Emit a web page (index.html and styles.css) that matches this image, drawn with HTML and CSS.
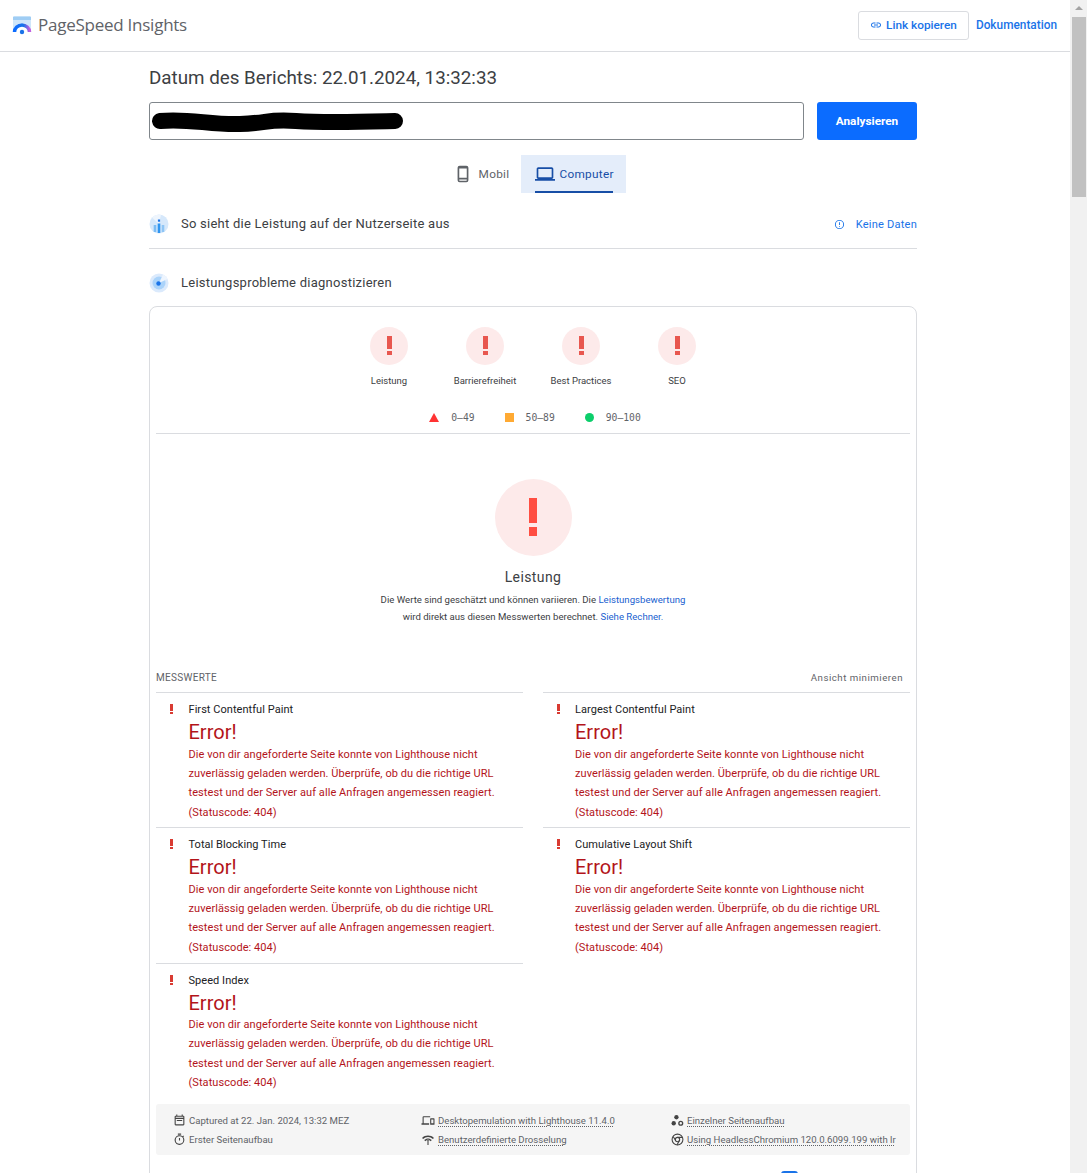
FILE: index.html
```html
<!DOCTYPE html>
<html lang="de">
<head>
  <meta charset="UTF-8" />
  <title>PageSpeed Insights</title>
  <link rel="stylesheet" href="styles.css">
</head>
<body>
<div class="window">
  <div class="page">
    <header class="topbar">
      <div class="brand">
        <svg class="logo" width="20" height="20" viewBox="0 0 20 20">
          <defs>
            <linearGradient id="arcGrad" x1="0" x2="1" y1="0" y2="0">
              <stop offset="0" stop-color="#0b6cff"/>
              <stop offset="0.6" stop-color="#1a73e8"/>
              <stop offset="1" stop-color="#c060e0"/>
            </linearGradient>
          </defs>
          <path d="M1 1.500a1 1 0 0 1 1-1h16a1 1 0 0 1 1 1V13H1z" fill="#cfe6fa"/>
          <path d="M1 1.500a1 1 0 0 1 1-1h16a1 1 0 0 1 1 1V4H1z" fill="#9fcdf4"/>
          <path d="M1 16a9 9 0 0 1 18 0" fill="#fff"/>
          <path d="M2.500 16a7.500 7 0 0 1 15 0" fill="none" stroke="url(#arcGrad)" stroke-width="3.500"/>
          <circle cx="10" cy="16" r="2.200" fill="#1a73e8"/>
        </svg>
        <span class="brand-name">PageSpeed Insights</span>
      </div>
      <div class="top-actions">
        <button class="copy-btn">
          <svg width="12" height="12" viewBox="0 0 24 24" fill="#1a73e8"><path d="M3.900 12c0-1.710 1.390-3.100 3.100-3.100h4V7H7c-2.760 0-5 2.240-5 5s2.240 5 5 5h4v-1.900H7c-1.710 0-3.100-1.390-3.100-3.100zM8 13h8v-2H8v2zm9-6h-4v1.900h4c1.710 0 3.100 1.390 3.100 3.100s-1.390 3.100-3.100 3.100h-4V17h4c2.760 0 5-2.240 5-5s-2.240-5-5-5z"/></svg>
          Link kopieren
        </button>
        <a class="doc-link">Dokumentation</a>
      </div>
    </header>

    <main class="content">
      <h1 class="report-date">Datum des Berichts: 22.01.2024, 13:32:33</h1>

      <div class="url-row">
        <div class="url-input">
          <svg class="scribble" width="256" height="26" viewBox="0 0 256 26">
            <path d="M9 12c28-3 50 4 80 3s26-5 56-3 60 1 99 0" fill="none" stroke="#000" stroke-width="16" stroke-linecap="round"/>
          </svg>
        </div>
        <button class="analyze-btn">Analysieren</button>
      </div>

      <div class="tabs">
        <div class="tab">
          <svg width="20" height="20" viewBox="0 0 24 24" fill="#5f6368"><path d="M16 2H8a2.500 2.500 0 0 0-2.500 2.500v15A2.500 2.500 0 0 0 8 22h8a2.500 2.500 0 0 0 2.500-2.500v-15A2.500 2.500 0 0 0 16 2zm.5 14.500h-9v-11h9zM7.500 18.500h9v1a.5.500 0 0 1-.5.500H8a.5.500 0 0 1-.5-.5z"/></svg>
          Mobil
        </div>
        <div class="tab active">
          <svg width="20" height="20" viewBox="0 0 24 24" fill="#174ea6"><path d="M20 18c1.100 0 2-.9 2-2V6c0-1.100-.9-2-2-2H4c-1.100 0-2 .9-2 2v10c0 1.100.9 2 2 2H0v2h24v-2h-4zM4 6h16v10H4V6z"/></svg>
          Computer
        </div>
      </div>

      <div class="section-row bordered">
        <svg class="section-icon" width="20" height="20" viewBox="0 0 20 20">
          <circle cx="10" cy="10" r="9.500" fill="#d6e8fb"/>
          <path d="M10 10L3 3.500A9.500 9.500 0 0 1 12 .7z" fill="#eef5fd"/>
          <rect x="8.900" y="5.500" width="2.200" height="2.200" fill="#1a73e8"/>
          <rect x="4.700" y="11" width="2.600" height="7" fill="#7cbcf4"/>
          <rect x="8.700" y="9.500" width="2.600" height="9.500" fill="#2f95f0"/>
          <rect x="12.700" y="11" width="2.600" height="7" fill="#8fc5f5"/>
        </svg>
        <span class="section-title">So sieht die Leistung auf der Nutzerseite aus</span>
        <span class="no-data">
          <svg width="11" height="11" viewBox="0 0 24 24" fill="#1a73e8"><path d="M12 2a10 10 0 1 0 0 20 10 10 0 0 0 0-20zm0 18a8 8 0 1 1 0-16 8 8 0 0 1 0 16zm-1-13h2v6h-2zm0 8h2v2h-2z"/></svg>
          Keine Daten
        </span>
      </div>

      <div class="section-row diagnose">
        <svg class="section-icon" width="20" height="20" viewBox="0 0 20 20">
          <circle cx="10" cy="10" r="9.500" fill="#dbeafc"/>
          <circle cx="10" cy="10" r="6.500" fill="#aad3fa"/>
          <path d="M10 10L14 1.500A9.500 9.500 0 0 1 18.500 6z" fill="#eef5fe"/>
          <circle cx="9.500" cy="10.500" r="2.200" fill="#1a73e8"/>
        </svg>
        <span class="section-title">Leistungsprobleme diagnostizieren</span>
      </div>

      <section class="report">
        <div class="gauges">
          <div class="gauge"><div class="gauge-dot"><span class="bang"></span></div><span class="gauge-label">Leistung</span></div>
          <div class="gauge"><div class="gauge-dot"><span class="bang"></span></div><span class="gauge-label">Barrierefreiheit</span></div>
          <div class="gauge"><div class="gauge-dot"><span class="bang"></span></div><span class="gauge-label">Best Practices</span></div>
          <div class="gauge"><div class="gauge-dot"><span class="bang"></span></div><span class="gauge-label">SEO</span></div>
        </div>

        <div class="legend">
          <span class="legend-item"><i class="tri"></i>0–49</span>
          <span class="legend-item"><i class="square"></i>50–89</span>
          <span class="legend-item"><i class="circle"></i>90–100</span>
        </div>

        <div class="score">
          <div class="score-dot"><span class="bang big"></span></div>
          <div class="score-title">Leistung</div>
          <p class="score-note">Die Werte sind geschätzt und können variieren. Die <a>Leistungsbewertung</a><br>wird direkt aus diesen Messwerten berechnet. <a>Siehe Rechner.</a></p>
        </div>

        <div class="metrics-head">
          <span class="metrics-title">MESSWERTE</span>
          <span class="metrics-toggle">Ansicht minimieren</span>
        </div>

        <div class="metrics">
          <div class="metric">
            <span class="bang small"></span>
            <div class="metric-name">First Contentful Paint</div>
            <div class="metric-error">Error!</div>
            <div class="metric-text">Die von dir angeforderte Seite konnte von Lighthouse nicht<br>zuverlässig geladen werden. Überprüfe, ob du die richtige URL<br>testest und der Server auf alle Anfragen angemessen reagiert.<br>(Statuscode: 404)</div>
          </div>
          <div class="metric">
            <span class="bang small"></span>
            <div class="metric-name">Largest Contentful Paint</div>
            <div class="metric-error">Error!</div>
            <div class="metric-text">Die von dir angeforderte Seite konnte von Lighthouse nicht<br>zuverlässig geladen werden. Überprüfe, ob du die richtige URL<br>testest und der Server auf alle Anfragen angemessen reagiert.<br>(Statuscode: 404)</div>
          </div>
          <div class="metric">
            <span class="bang small"></span>
            <div class="metric-name">Total Blocking Time</div>
            <div class="metric-error">Error!</div>
            <div class="metric-text">Die von dir angeforderte Seite konnte von Lighthouse nicht<br>zuverlässig geladen werden. Überprüfe, ob du die richtige URL<br>testest und der Server auf alle Anfragen angemessen reagiert.<br>(Statuscode: 404)</div>
          </div>
          <div class="metric">
            <span class="bang small"></span>
            <div class="metric-name">Cumulative Layout Shift</div>
            <div class="metric-error">Error!</div>
            <div class="metric-text">Die von dir angeforderte Seite konnte von Lighthouse nicht<br>zuverlässig geladen werden. Überprüfe, ob du die richtige URL<br>testest und der Server auf alle Anfragen angemessen reagiert.<br>(Statuscode: 404)</div>
          </div>
          <div class="metric">
            <span class="bang small"></span>
            <div class="metric-name">Speed Index</div>
            <div class="metric-error">Error!</div>
            <div class="metric-text">Die von dir angeforderte Seite konnte von Lighthouse nicht<br>zuverlässig geladen werden. Überprüfe, ob du die richtige URL<br>testest und der Server auf alle Anfragen angemessen reagiert.<br>(Statuscode: 404)</div>
          </div>
        </div>

        <div class="env">
          <div class="env-col col-a">
            <span class="env-item">
              <svg width="13" height="13" viewBox="0 0 24 24" fill="#444"><path d="M19 3h-1V1h-2v2H8V1H6v2H5a2 2 0 0 0-2 2v14a2 2 0 0 0 2 2h14a2 2 0 0 0 2-2V5a2 2 0 0 0-2-2zm0 16H5V9h14zM5 7V5h14v2zm2 4h10v2H7z"/></svg>
              Captured at 22. Jan. 2024, 13:32 MEZ
            </span>
            <span class="env-item">
              <svg width="13" height="13" viewBox="0 0 24 24" fill="#444"><path d="M9 1h6v2H9zm10 6.400 1.400-1.400L19 4.600l-1.400 1.400A9 9 0 1 0 21 13a9 9 0 0 0-2-5.600zM12 20a7 7 0 1 1 0-14 7 7 0 0 1 0 14zm-1-11h2v5h-2z"/></svg>
              Erster Seitenaufbau
            </span>
          </div>
          <div class="env-col col-b">
            <span class="env-item">
              <svg width="14" height="13" viewBox="0 0 24 24" fill="#444"><path d="M4 6h12V4H4a2 2 0 0 0-2 2v11H0v3h14v-3H4zm19 2h-6a1 1 0 0 0-1 1v10a1 1 0 0 0 1 1h6a1 1 0 0 0 1-1V9a1 1 0 0 0-1-1zm-1 9h-4v-7h4z"/></svg>
              <u>Desktopemulation with Lighthouse 11.4.0</u>
            </span>
            <span class="env-item">
              <svg width="14" height="13" viewBox="0 0 24 24" fill="#444"><path d="M1 9l2 2c5-5 13-5 18 0l2-2C17 3 7 3 1 9zm4 4 2 2c2.800-2.800 7.200-2.800 10 0l2-2c-3.900-3.900-10.100-3.900-14 0zm6-1h2v10h-2z"/></svg>
              <u>Benutzerdefinierte Drosselung</u>
            </span>
          </div>
          <div class="env-col col-c">
            <span class="env-item">
              <svg width="13" height="13" viewBox="0 0 24 24"><circle cx="10" cy="6" r="4" fill="#444"/><circle cx="5" cy="17" r="4" fill="#444"/><circle cx="18" cy="17" r="3.500" fill="none" stroke="#444" stroke-width="2.500"/></svg>
              <u>Einzelner Seitenaufbau</u>
            </span>
            <span class="env-item">
              <svg width="13" height="13" viewBox="0 0 24 24" fill="none" stroke="#444" stroke-width="2"><circle cx="12" cy="12" r="10"/><circle cx="12" cy="12" r="4"/><path d="M12 8h9M8.500 14 4 6.500M15.500 14 11 22"/></svg>
              <u>Using HeadlessChromium 120.0.6099.199 with lr</u>
            </span>
          </div>
        </div>

        <div class="view-switch"><span class="switch-box"></span></div>
      </section>
    </main>
  </div>

  <div class="scrollbar">
    <div class="scroll-up"></div>
    <div class="scroll-thumb"></div>
  </div>
</div>
</body>
</html>
```

FILE: styles.css
```css
* {
  box-sizing: border-box;
}

html, body {
  margin: 0;
  height: 1173px;
  overflow: hidden;
}

body {
  font-family: 'Roboto', sans-serif;
  color: #202124;
  background-color: white;
}

button {
  font-family: inherit;
}

a {
  color: #1a5fd0;
}

.window {
  display: flex;
  height: 1173px;
}

.page {
  flex: 1;
  min-width: 0;
  overflow: hidden;
}

.scrollbar {
  width: 17px;
  background-color: #f1f1f1;
  flex-shrink: 0;
}

.scroll-up {
  height: 17px;
  position: relative;
}

.scroll-up::after {
  content: "";
  position: absolute;
  left: 5px;
  top: 6px;
  border-left: 4px solid transparent;
  border-right: 4px solid transparent;
  border-bottom: 4px solid #a3a3a3;
}

.scroll-thumb {
  height: 180px;
  margin: 0 1px 0 2px;
  background-color: #c1c1c1;
}

/* top bar */
.topbar {
  height: 52px;
  border-bottom: 1px solid #dadce0;
  display: flex;
  align-items: center;
  justify-content: space-between;
  padding: 0 13px 2px 12px;
}

.brand {
  display: flex;
  align-items: center;
  gap: 6px;
}

.logo {
  margin-top: 2px;
}

.brand-name {
  font-family: 'Open Sans', sans-serif;
  font-size: 17px;
  letter-spacing: -0.25px;
  color: #5f6368;
}

.top-actions {
  display: flex;
  align-items: center;
  gap: 7px;
  margin-top: 1px;
}

.copy-btn {
  width: 111px;
  height: 29px;
  background-color: white;
  border: 1px solid #dadce0;
  border-radius: 3px;
  color: #1a73e8;
  font-size: 11.800px;
  font-weight: 500;
  display: flex;
  align-items: center;
  justify-content: center;
  gap: 4px;
  padding: 0;
}

.doc-link {
  color: #1a73e8;
  font-size: 11.850px;
  font-weight: 500;
}

/* main column */
.content {
  width: 768px;
  margin-left: 149px;
}

.report-date {
  margin: 15px 0 0;
  height: 35px;
  line-height: 22px;
  font-size: 18.800px;
  font-weight: 400;
  color: #3c4043;
}

.url-row {
  display: flex;
  justify-content: space-between;
  height: 38px;
}

.url-input {
  width: 655px;
  position: relative;
  border: 1px solid #80868b;
  border-radius: 3px;
}

.scribble {
  position: absolute;
  left: 1px;
  top: 6px;
}

.analyze-btn {
  width: 100px;
  background-color: #0b6cff;
  border: none;
  border-radius: 3px;
  color: white;
  font-size: 11.800px;
  font-weight: 700;
}

.tabs {
  display: flex;
  justify-content: center;
  margin-top: 15px;
  height: 38px;
  margin-left: 13px;
}

.tab {
  display: flex;
  align-items: center;
  gap: 6px;
  padding: 0 12px 0 0;
  font-size: 11.800px;
  letter-spacing: 0.3px;
  color: #5f6368;
}

.tab.active {
  width: 105px;
  flex-shrink: 0;
  padding: 0 0 0 14px;
  gap: 4px;
  background-color: #e4edfa;
  color: #174ea6;
  position: relative;
}

.tab.active::after {
  content: "";
  position: absolute;
  left: 14px;
  right: 13px;
  bottom: 0;
  height: 2px;
  background-color: #174ea6;
}

.section-row {
  display: flex;
  align-items: center;
  font-size: 13px;
}

.section-row.bordered {
  height: 56px;
  border-bottom: 1px solid #dadce0;
  padding-top: 6px;
}

.section-row.diagnose {
  height: 57px;
  padding-top: 10px;
}

.section-icon {
  margin-right: 12px;
  flex-shrink: 0;
}

.section-title {
  color: #3c4043;
  letter-spacing: 0.25px;
}

.no-data {
  margin-left: auto;
  margin-top: 2px;
  display: flex;
  align-items: center;
  gap: 11px;
  color: #1a73e8;
  font-size: 11.100px;
  letter-spacing: 0.2px;
}

/* report card */
.report {
  border: 1px solid #dadce0;
  border-radius: 8px;
  padding: 0 6px;
  height: 900px;
}

.gauges {
  display: flex;
  justify-content: center;
  padding-top: 20px;
}

.gauge {
  width: 96px;
  display: flex;
  flex-direction: column;
  align-items: center;
}

.gauge-dot {
  width: 38px;
  height: 38px;
  border-radius: 50%;
  background-color: #fdeaea;
  display: flex;
  justify-content: center;
  padding-top: 9px;
}

.gauge-label {
  margin-top: 9px;
  font-size: 9.500px;
  line-height: 14px;
  color: #3c4043;
}

.bang {
  display: block;
  width: 5px;
  height: 13px;
  background-color: #e8574f;
  position: relative;
}

.bang::after {
  content: "";
  position: absolute;
  left: 0;
  top: 15px;
  width: 5px;
  height: 4px;
  background-color: #e8574f;
}

.bang.big {
  width: 8px;
  height: 25px;
  background-color: #ff4e42;
}

.bang.big::after {
  width: 8px;
  top: 29px;
  height: 9px;
  background-color: #ff4e42;
}

.bang.small {
  position: absolute;
  left: 14px;
  top: 11px;
  width: 3px;
  height: 7px;
  background-color: #d93b32;
}

.bang.small::after {
  top: 8px;
  width: 3px;
  height: 2px;
  background-color: #d93b32;
}

.legend {
  display: flex;
  justify-content: center;
  gap: 30px;
  height: 32px;
  margin-top: 14px;
  padding: 9px 0 0 4px;
  border-bottom: 1px solid #dadce0;
  font-family: 'DejaVu Sans Mono', monospace;
  font-size: 9.700px;
  color: #5f6368;
}

.legend-item {
  display: flex;
  gap: 12px;
  height: 13px;
  align-items: center;
}

.tri {
  width: 0;
  height: 0;
  border-left: 5px solid transparent;
  border-right: 5px solid transparent;
  border-bottom: 9px solid #ff3333;
}

.square {
  width: 9px;
  height: 9px;
  background-color: #ffaa33;
}

.circle {
  width: 9px;
  height: 9px;
  border-radius: 50%;
  background-color: #0cce6b;
}

.score {
  padding-top: 45px;
  height: 232px;
  text-align: center;
}

.score-dot {
  width: 77px;
  height: 77px;
  border-radius: 50%;
  background-color: #fdeaea;
  margin: 0 auto;
  display: flex;
  justify-content: center;
  padding-top: 19px;
}

.score-title {
  margin-top: 13px;
  font-size: 14px;
  line-height: 17px;
  letter-spacing: 0.4px;
  color: #3c4043;
}

.score-note {
  margin: 5px 0 0;
  font-size: 9.600px;
  line-height: 17px;
  color: #3c4043;
}

.metrics-head {
  display: flex;
  justify-content: space-between;
  padding-right: 7px;
  height: 26px;
  padding-top: 6px;
  font-size: 10px;
  line-height: 12px;
  letter-spacing: 0.3px;
  color: #5f6368;
}

.metrics-toggle {
  font-size: 9.700px;
  letter-spacing: 0.5px;
}

.metrics {
  display: grid;
  grid-template-columns: 367px 367px;
  justify-content: space-between;
  grid-auto-rows: 135.300px;
}

.metric {
  border-top: 1px solid #dadce0;
  padding: 10px 0 0 32.500px;
  position: relative;
}

.metric:nth-child(even) {
  padding-left: 32px;
}

.metric-name {
  font-size: 11px;
  line-height: 13px;
  letter-spacing: 0.05px;
  color: #202124;
}

.metric-error {
  font-size: 20px;
  line-height: 24px;
  margin-top: 4px;
  color: #b3141a;
}

.metric-text {
  margin-top: 0.500px;
  font-size: 11px;
  line-height: 19.350px;
  letter-spacing: 0.07px;
  color: #b3141a;
}

.env {
  margin-top: 6px;
  height: 51px;
  background-color: #f5f5f5;
  border-radius: 3px;
  display: flex;
  padding: 10px 0 0 17px;
  font-size: 9.600px;
  color: #5f6368;
}

.env-col {
  display: flex;
  flex-direction: column;
  gap: 6px;
}

.col-a {
  width: 248px;
}

.col-b {
  width: 250px;
}

.env-item {
  display: flex;
  align-items: center;
  gap: 3px;
  height: 13px;
  white-space: nowrap;
}

.env-item u {
  text-decoration: underline dotted #5f6368;
  text-underline-offset: 2px;
}

.view-switch {
  display: flex;
  justify-content: flex-end;
  padding-right: 112px;
  margin-top: 16px;
}

.switch-box {
  width: 17px;
  height: 17px;
  background-color: #1a73e8;
  border-radius: 3px;
}
```
